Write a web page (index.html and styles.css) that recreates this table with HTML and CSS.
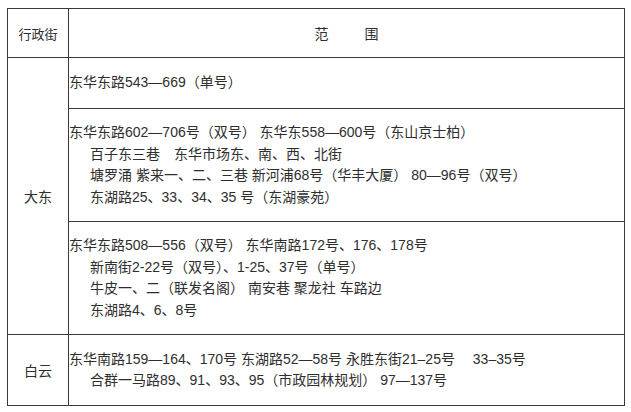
FILE: index.html
```html
<!DOCTYPE html>
<html lang="zh-CN">
<head>
<meta charset="utf-8">
<title>范围</title>
<link rel="stylesheet" href="styles.css">
</head>
<body>
<table class="grid">
  <colgroup><col class="c1"><col class="c2"></colgroup>
  <tr class="r-head">
    <td class="name head-name">行政街</td>
    <td class="head-range">范<span class="sp"></span>围</td>
  </tr>
  <tr class="r1">
    <td class="name" rowspan="3">大东</td>
    <td class="range">
      <div class="ln">东华东路543—669（单号）</div>
    </td>
  </tr>
  <tr class="r2">
    <td class="range">
      <div class="ln">东华东路602—706号（双号） 东华东558—600号（东山京士柏）</div>
      <div class="ln ind">百子东三巷　东华市场东、南、西、北街</div>
      <div class="ln ind">塘罗涌 紫来一、二、三巷 新河浦68号（华丰大厦） 80—96号（双号）</div>
      <div class="ln ind">东湖路25、33、34、35 号（东湖豪苑）</div>
    </td>
  </tr>
  <tr class="r3">
    <td class="range">
      <div class="ln">东华东路508—556（双号） 东华南路172号、176、178号</div>
      <div class="ln ind">新南街2-22号（双号）、1-25、37号（单号）</div>
      <div class="ln ind">牛皮一、二（联发名阁） 南安巷 聚龙社 车路边</div>
      <div class="ln ind">东湖路4、6、8号</div>
    </td>
  </tr>
  <tr class="r4">
    <td class="name">白云</td>
    <td class="range">
      <div class="ln">东华南路159—164、170号 东湖路52—58号 永胜东街21–25号　 33–35号</div>
      <div class="ln ind">合群一马路89、91、93、95（市政园林规划） 97—137号</div>
    </td>
  </tr>
</table>
</body>
</html>
```

FILE: styles.css
```css
html, body {
  margin: 0;
  padding: 0;
  background: #ffffff;
}

body {
  font-family: "Liberation Sans", "Noto Sans CJK SC", sans-serif;
  color: #2e2e2e;
  font-size: 14px;
}

.grid {
  margin: 8px 0 0 7px;
  border-collapse: collapse;
  table-layout: fixed;
  width: 617px;
}

.c1 { width: 61px; }
.c2 { width: 556px; }

.grid td {
  border: 1px solid #3a3a3a;
  padding: 0;
  vertical-align: middle;
}

.r-head { height: 49px; }
.r1 { height: 51px; }
.r2 { height: 113px; }
.r3 { height: 113px; }
.r4 { height: 71px; }

.name {
  text-align: center;
  font-size: 14px;
}

.head-name {
  font-size: 13px;
}

.head-range {
  text-align: center;
  font-size: 14px;
}

.sp {
  display: inline-block;
  width: 36px;
}

.range {
  padding-left: 1px;
}

.ln {
  line-height: 21.5px;
  white-space: nowrap;
}

.ind {
  padding-left: 21px;
}
```
